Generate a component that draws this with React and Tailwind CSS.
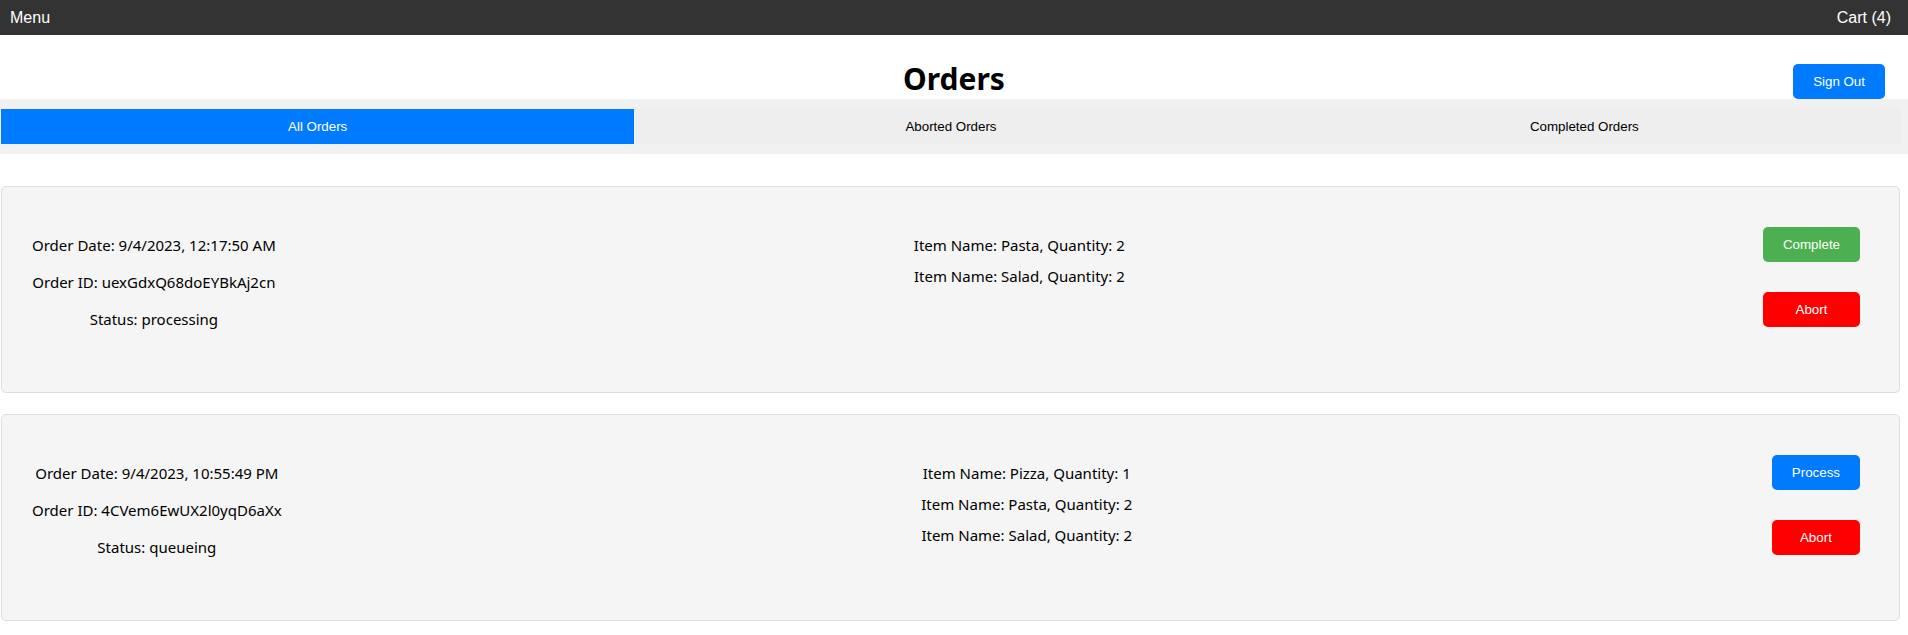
import React from 'react';

const orders = [
    {
        date: '9/4/2023, 12:17:50 AM',
        id: 'uexGdxQ68doEYBkAj2cn',
        status: 'processing',
        items: [
            { name: 'Pasta', qty: 2 },
            { name: 'Salad', qty: 2 },
        ],
    },
    {
        date: '9/4/2023, 10:55:49 PM',
        id: '4CVem6EwUX2l0yqD6aXx',
        status: 'queueing',
        items: [
            { name: 'Pizza', qty: 1 },
            { name: 'Pasta', qty: 2 },
            { name: 'Salad', qty: 2 },
        ],
    },
];

const tabs = ['All Orders', 'Aborted Orders', 'Completed Orders'];

// botão padrão (Arial 13.33px, como o default do navegador)
const Btn = ({ color, children }) => (
    <button
        className={`rounded-[5px] px-5 py-[10px] text-[13.33px] leading-[15px] text-white font-['Liberation_Sans',Arial,sans-serif] ${color}`}
    >
        {children}
    </button>
);

const OrderCard = ({ order }) => {
    const queued = order.status === 'queueing';
    return (
        <div className="flex h-[207px] w-[1899px] items-start justify-between rounded-[5px] border border-[#dddddd] bg-[#f5f5f5] pl-[30px] pr-[39px] pt-[40px] font-['Noto_Sans',sans-serif] text-[15px] leading-[21px] text-black">
            {/* dados do pedido */}
            <div className="flex flex-col items-center gap-4 pt-[7.5px] text-center">
                <p>Order Date: {order.date}</p>
                <p>Order ID: {order.id}</p>
                <p>Status: {order.status}</p>
            </div>

            {/* itens */}
            <div className="flex flex-col items-center gap-[10px] pt-[7.5px] text-center">
                {order.items.map((it, i) => (
                    <p key={i}>
                        Item Name: {it.name}, Quantity: {it.qty}
                    </p>
                ))}
            </div>

            {/* ações */}
            <div className="flex flex-col gap-[30px]">
                {queued ? <Btn color="bg-[#007bff]">Process</Btn> : <Btn color="bg-[#4caf50]">Complete</Btn>}
                <Btn color="bg-[#ff0000]">Abort</Btn>
            </div>
        </div>
    );
};

export default function App() {
    return (
        <div className="min-h-screen bg-white">
            {/* barra superior */}
            <div className="flex h-[35px] items-center justify-between bg-[#333333] pl-[10px] pr-[17px] font-['Liberation_Sans',Arial,sans-serif] text-[16px] text-white">
                <span>Menu</span>
                <span>Cart (4)</span>
            </div>

            {/* título + sign out */}
            <div className="grid h-[64px] grid-cols-[1fr_auto_1fr] items-start">
                <div />
                <h1 className="mt-[27px] font-['Noto_Sans',sans-serif] text-[30px] font-bold leading-[34px] text-black">
                    Orders
                </h1>
                <div className="flex h-full items-end justify-end pr-[23px]">
                    <Btn color="bg-[#007bff]">Sign Out</Btn>
                </div>
            </div>

            {/* abas */}
            <div className="bg-[#f1f1f1] py-[10px]">
                <div className="ml-px mr-[7px] grid grid-cols-3 bg-[#eeeeee] font-['Liberation_Sans',Arial,sans-serif] text-[13.33px]">
                    {tabs.map((t, i) => (
                        <div
                            key={t}
                            className={`flex h-[35px] items-center justify-center ${i === 0 ? 'bg-[#007bff] text-white' : 'text-black'}`}
                        >
                            {t}
                        </div>
                    ))}
                </div>
            </div>

            {/* pedidos */}
            <div className="ml-px mt-[32px] flex flex-col gap-[21px] pb-4">
                {orders.map((o) => (
                    <OrderCard key={o.id} order={o} />
                ))}
            </div>
        </div>
    );
}
